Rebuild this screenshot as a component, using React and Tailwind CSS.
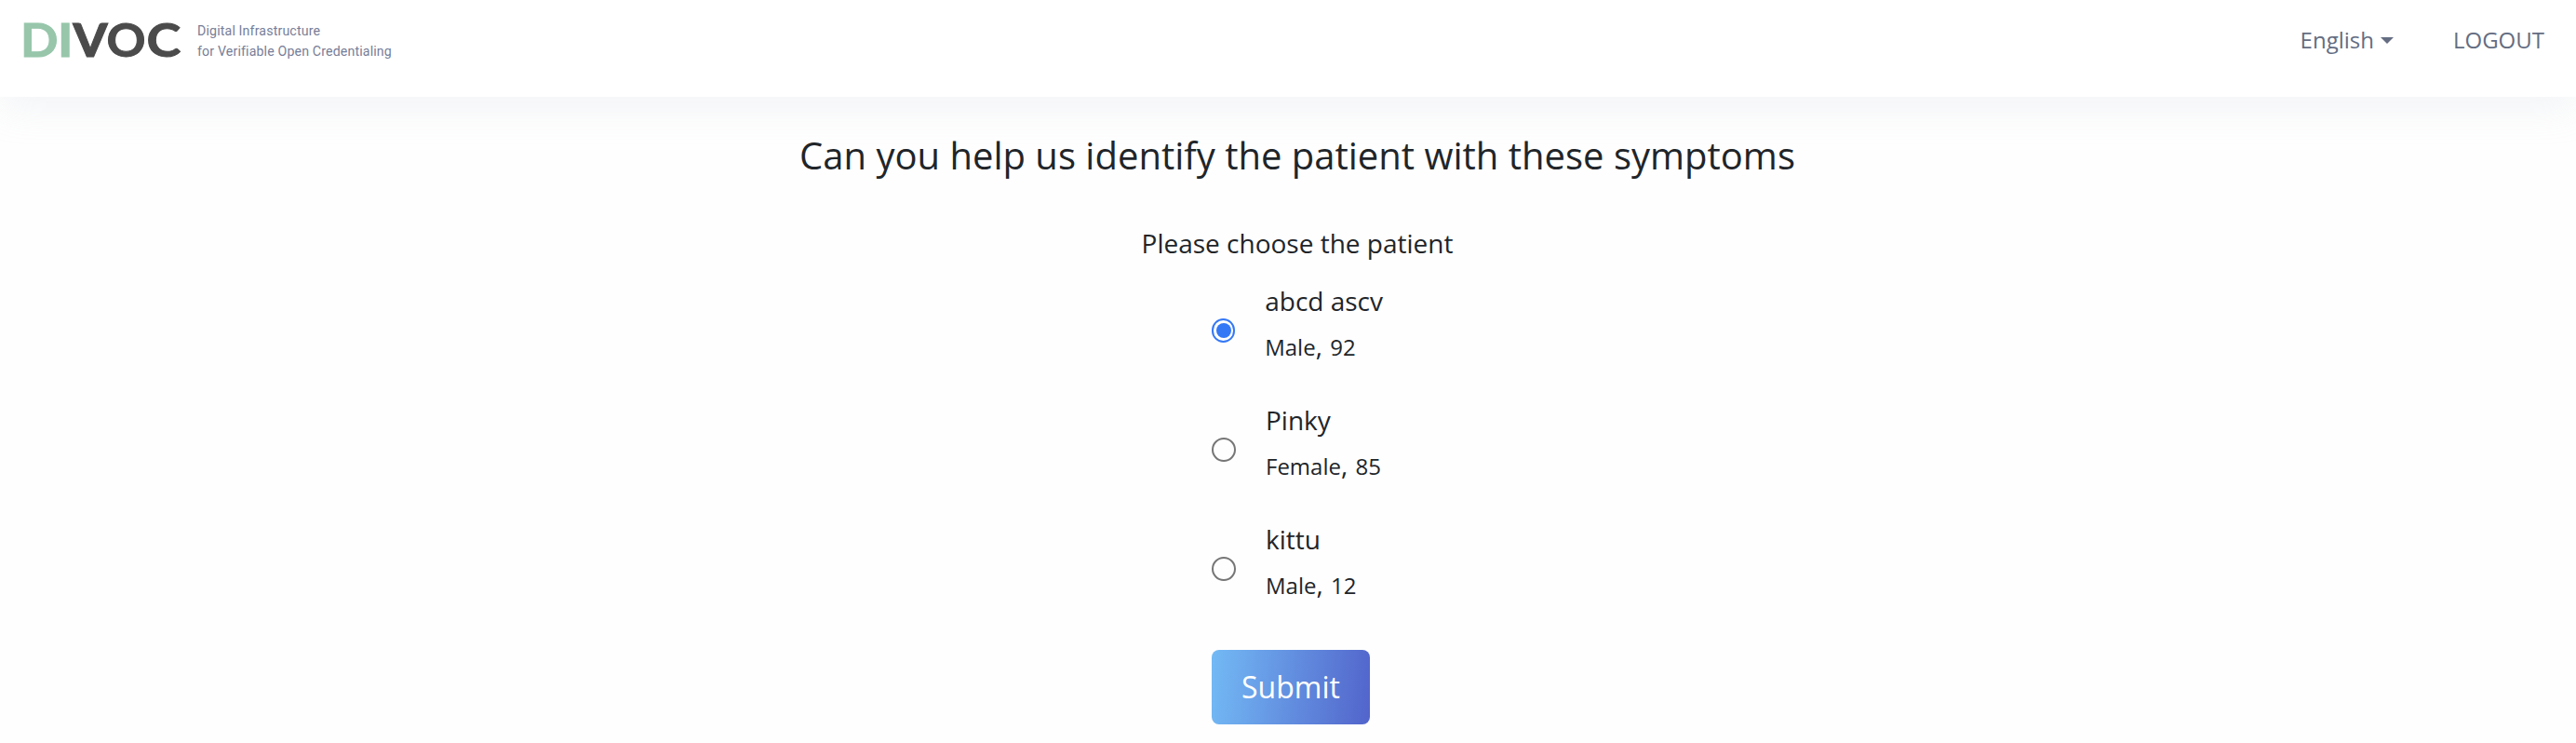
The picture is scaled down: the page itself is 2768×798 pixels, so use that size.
const patients = [
  { name: "abcd ascv", gender: "Male", age: 92 },
  { name: "Pinky", gender: "Female", age: 85 },
  { name: "kittu", gender: "Male", age: 12 },
];

function Logo() {
  return (
    <div className="flex items-start">
      <svg width="172" height="44" viewBox="0 0 172 44" className="overflow-visible font-['Lato',sans-serif] font-bold">
        <g fontSize="49.8" stroke="#97c6ab" strokeWidth="1" fill="#97c6ab">
          <text x="-3.9" y="38.5" textLength="40.5" lengthAdjust="spacingAndGlyphs">D</text>
          <text x="35.8" y="38.5" textLength="17" lengthAdjust="spacingAndGlyphs">I</text>
        </g>
        <g fontSize="49.8" stroke="#4b4b4b" strokeWidth="1" fill="#4b4b4b">
          <text x="52.6" y="38.5" textLength="37" lengthAdjust="spacingAndGlyphs" className="font-black">V</text>
          <text x="88.5" y="38.5" textLength="42" lengthAdjust="spacingAndGlyphs">O</text>
          <text x="131.4" y="38.5" textLength="36.7" lengthAdjust="spacingAndGlyphs">C</text>
        </g>
      </svg>
      <div className="pl-[14px] font-['Roboto',sans-serif] text-[14.2px] leading-[22px] tracking-[0.14px] text-[#777e98]">
        <div>Digital Infrastructure</div>
        <div>for Verifiable Open Credentialing</div>
      </div>
    </div>
  );
}

function Header() {
  return (
    <header className="flex h-[104px] items-start justify-between bg-white pl-[26px] pr-[34px] pt-[22px] shadow-[0_12px_40px_rgba(193,207,217,0.2)]">
      <Logo />
      <nav className="flex items-center gap-[64px] pt-[3px] text-[24px] leading-[36px] text-[#646d82]">
        <div className="flex items-center">
          <span>English</span>
          <svg width="14" height="7" viewBox="0 0 14 7" className="ml-[7px]">
            <path d="M0 0h14L7 7z" fill="#646d82" />
          </svg>
        </div>
        <span>LOGOUT</span>
      </nav>
    </header>
  );
}

function Patient({ name, gender, age, selected }) {
  return (
    <label className="flex h-[128px] items-start">
      <span
        className={
          selected
            ? "mt-[41px] flex size-[26px] items-center justify-center rounded-full border-2 border-[#3478f6]"
            : "mt-[41px] flex size-[26px] items-center justify-center rounded-full border-2 border-[#767676]"
        }
      >
        {selected && <span className="size-4 rounded-full bg-[#3478f6]" />}
      </span>
      <span className="-mt-0.5 ml-8 flex flex-col whitespace-nowrap">
        <span className="h-[48px] leading-[48px]">{name}</span>
        <span className="h-[48px] leading-[48px]">
          <span className="text-[24px]">{gender}</span>,{" "}
          <span className="ml-px text-[24px]">{age}</span>
        </span>
      </span>
    </label>
  );
}

export default function App() {
  return (
    <div className="min-h-[798px] bg-[#fefefe] font-['Open_Sans',sans-serif] text-[28px] text-[#212529]">
      <Header />
      <main className="flex flex-col items-center pl-[20px] pt-[39px]">
        <h1 className="text-[40px] leading-[48px]">Can you help us identify the patient with these symptoms</h1>
        <p className="mt-[49px] leading-[42px]">Please choose the patient</p>
        <form className="mt-[19px] w-[184px]">
          {patients.map((p, i) => (
            <Patient key={p.name} {...p} selected={i === 0} />
          ))}
          <button
            type="button"
            className="mt-[13px] h-[80px] w-[170px] rounded-[8px] bg-linear-[96deg,#73baf5_0%,#5264cb_100%] text-[32px] text-white"
          >
            Submit
          </button>
        </form>
      </main>
    </div>
  );
}
